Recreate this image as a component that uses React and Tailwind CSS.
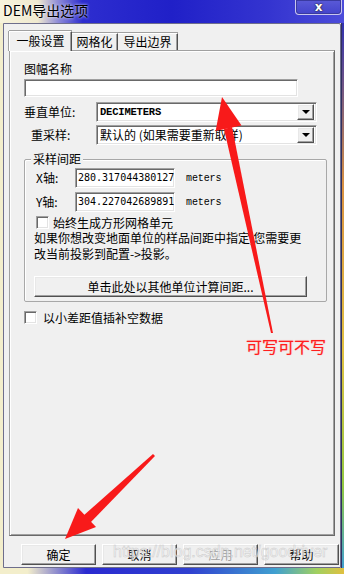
import React from "react";

const sunken =
  "bg-white border border-t-[#a0a0a0] border-l-[#a0a0a0] border-b-white border-r-white shadow-[inset_1px_1px_0_#696969,inset_-1px_-1px_0_#e3e3e3]";
const raised =
  "bg-[#f0f0f0] border border-t-white border-l-white border-b-[#505050] border-r-[#505050] shadow-[inset_-1px_-1px_0_#a0a0a0,inset_1px_1px_0_#e8e8e8]";

function Check() {
  return <div className={"w-[13px] h-[13px] shrink-0 " + sunken} />;
}

function Combo({ children, mono }) {
  return (
    <div className={"w-[221px] h-[20px] flex items-center pl-[3px] pr-[2px] " + sunken}>
      <div
        className={
          "flex-1 whitespace-nowrap overflow-hidden leading-[16px] " +
          (mono
            ? "font-['Liberation_Mono',monospace] font-bold text-[10.5px] tracking-[-0.2px]"
            : "text-[12px]")
        }
      >
        {children}
      </div>
      <div className={"w-[17px] h-[16px] flex items-center justify-center " + raised}>
        <div className="w-0 h-0 border-l-[4px] border-r-[4px] border-t-[4px] border-l-transparent border-r-transparent border-t-black" />
      </div>
    </div>
  );
}

export default function App() {
  return (
    <div className="relative w-[344px] h-[574px] overflow-hidden flex flex-col font-['Noto_Sans_CJK_SC',sans-serif] text-[12px] text-black bg-[#f3eecb]">
      {/* title bar */}
      <div className="h-[23px] shrink-0 flex justify-between items-start bg-[linear-gradient(90deg,#f7f3dc_0%,#efe9cf_11%,#8d8ad8_17%,#2d2dcf_24%,#2020c8_50%,#3434d0_78%,#4c4cda_100%)]">
        <div className="pl-[3px] pt-[1px] text-[14px] leading-[18px] text-black [text-shadow:0_0_3px_#ffffff]">
          DEM导出选项
        </div>
        <div className="mr-[2px] w-[47px] h-[15px] rounded-b-[4px] border border-t-0 border-[#c9c6ee] shadow-[inset_0_0_0_1px_#3a3aa0] bg-[linear-gradient(180deg,#5a5ad8,#4444cc)] flex items-center justify-center">
          <span className="font-['DejaVu_Sans',sans-serif] font-bold text-[12px] leading-[13px] text-white [text-shadow:0_0_1px_#222,0_0_2px_#222]">
            x
          </span>
        </div>
      </div>

      {/* body */}
      <div className="flex flex-1">
        <div className="w-[3px] bg-[#f3eecb]" />
        <div className="w-[338px] h-[545px] bg-[#f0f0f0] border border-[#6e6e8c] rounded-tr-[2px] pt-[7px] pl-[5px] flex flex-col">
          {/* tabs */}
          <div className="flex items-end h-[19px] relative z-10">
            <div className="w-[63px] h-[20px] -mb-[1px] bg-[#f0f0f0] border-t border-l border-t-white border-l-white border-r border-r-[#505050] shadow-[inset_-1px_0_0_#a0a0a0,0_-1px_0_#a0a0a0,-1px_0_0_#a0a0a0] flex justify-center pt-[1px] leading-[16px] text-[12px]">
              一般设置
            </div>
            <div className="w-[46px] h-[17px] bg-[#f0f0f0] border-t border-t-white border-r border-r-[#505050] shadow-[inset_-1px_0_0_#a0a0a0,0_-1px_0_#a0a0a0] flex justify-center leading-[16px]">
              网格化
            </div>
            <div className="w-[60px] h-[17px] bg-[#f0f0f0] border-t border-t-white border-r border-r-[#505050] shadow-[inset_-1px_0_0_#a0a0a0,0_-1px_0_#a0a0a0] flex justify-center leading-[16px]">
              导出边界
            </div>
          </div>

          {/* panel */}
          <div className="w-[326px] h-[486px] border border-t-[#a0a0a0] border-l-[#a0a0a0] border-b-[#696969] border-r-[#696969] shadow-[inset_1px_1px_0_#ffffff,inset_-1px_-1px_0_#a0a0a0] pt-[10px] pl-[14px] flex flex-col">
            <div className="h-[16px] leading-[16px]">图幅名称</div>
            <div className={"mt-[2px] w-[274px] h-[18px] " + sunken} />

            <div className="mt-[5px] flex items-center h-[20px]">
              <div className="w-[72px] leading-[16px]">垂直单位:</div>
              <Combo mono>DECIMETERS</Combo>
            </div>
            <div className="mt-[3px] flex items-center h-[20px]">
              <div className="ml-[7px] w-[65px] leading-[16px]">重采样:</div>
              <Combo>默认的 (如果需要重新取样)</Combo>
            </div>

            {/* group box */}
            <div className="relative mt-[14px] w-[303px] h-[143px] border border-[#a8a8a8] rounded-[2px] shadow-[inset_1px_1px_0_#ffffff] pt-[8px] pl-[11px]">
              <div className="absolute -top-[9px] left-[6px] px-[2px] bg-[#f0f0f0] leading-[16px]">
                采样间距
              </div>
              <div className="flex items-center h-[20px]">
                <div className="w-[39px] leading-[16px]">X轴:</div>
                <div className={"w-[100px] h-[20px] flex items-center pl-[2px] overflow-hidden " + sunken}>
                  <span className="font-['DejaVu_Sans_Mono',monospace] text-[10px] leading-[14px] whitespace-nowrap">
                    280.317044380127
                  </span>
                </div>
                <span className="ml-[11px] font-['Liberation_Mono',monospace] text-[10px] tracking-[-0.1px]">
                  meters
                </span>
              </div>
              <div className="mt-[4px] flex items-center h-[20px]">
                <div className="w-[39px] leading-[16px]">Y轴:</div>
                <div className={"w-[100px] h-[20px] flex items-center pl-[2px] overflow-hidden " + sunken}>
                  <span className="font-['DejaVu_Sans_Mono',monospace] text-[10px] leading-[14px] whitespace-nowrap">
                    304.227042689891
                  </span>
                </div>
                <span className="ml-[11px] font-['Liberation_Mono',monospace] text-[10px] tracking-[-0.1px]">
                  meters
                </span>
              </div>
              <div className="mt-[4px] flex items-center h-[13px]">
                <Check />
                <span className="ml-[4px] leading-[13px]">始终生成方形网格单元</span>
              </div>
              <div className="-ml-[2px] mt-[1px] leading-[16px] whitespace-nowrap">
                如果你想改变地面单位的样品间距中指定,您需要更
                <br />
                改当前投影到配置-&gt;投影。
              </div>
              <div className={"-ml-[2px] mt-[14px] w-[273px] h-[21px] flex items-center justify-center leading-[16px] " + raised}>
                单击此处以其他单位计算间距...
              </div>
            </div>

            <div className="mt-[9px] flex items-center h-[13px]">
              <Check />
              <span className="ml-[6px] leading-[13px]">以小差距值插补空数据</span>
            </div>
          </div>

          {/* buttons */}
          <div className="mt-[8px] ml-[12px] flex gap-[6px]">
            <div className={"w-[75px] h-[21px] flex items-center justify-center leading-[16px] " + raised}>确定</div>
            <div className={"w-[75px] h-[21px] flex items-center justify-center leading-[16px] " + raised}>取消</div>
            <div className={"w-[75px] h-[21px] flex items-center justify-center leading-[16px] text-[#a0a0a0] " + raised}>应用</div>
            <div className={"w-[75px] h-[21px] flex items-center justify-center leading-[16px] " + raised}>帮助</div>
          </div>
        </div>
        <div className="w-[3px] bg-[linear-gradient(180deg,#3030b0_0%,#d89040_30%,#e0c040_60%,#90c840_85%,#40a0d0_100%)] border-l border-[#303060]" />
      </div>
      <div className="h-[6px] shrink-0 bg-[linear-gradient(90deg,#f3eecb_0%,#f3eecb_8%,#2a2ad0_25%,#3040d0_55%,#40a0d0_80%,#a0d060_92%,#e0c040_100%)]" />

      {/* annotation overlays */}
      <div className="absolute left-[113px] top-[544px] font-['Liberation_Sans',sans-serif] text-[16px] leading-[16px] text-[#f8f8f8] [-webkit-text-stroke:0.5px_#c2c2c2] whitespace-nowrap opacity-80 pointer-events-none">
        https://blog.csdn.net/goodriver
      </div>
      <div className="absolute left-[246px] top-[337px] text-[16px] leading-[18px] text-[#ff1e1e] [text-shadow:0_0_1px_#ff8080] whitespace-nowrap">
        可写可不写
      </div>
      <svg className="absolute left-0 top-0 pointer-events-none" width="344" height="574" viewBox="0 0 344 574">
        <polygon points="271,333 273,333 232,127 224,129" fill="#f81a1a" />
        <polygon points="222,97 241.5,125.6 215.6,131" fill="#f81a1a" />
        <polygon points="153,454 155,456 90,523 83,516" fill="#f81a1a" />
        <polygon points="65,539 96,527 78,508" fill="#f81a1a" />
      </svg>
    </div>
  );
}
